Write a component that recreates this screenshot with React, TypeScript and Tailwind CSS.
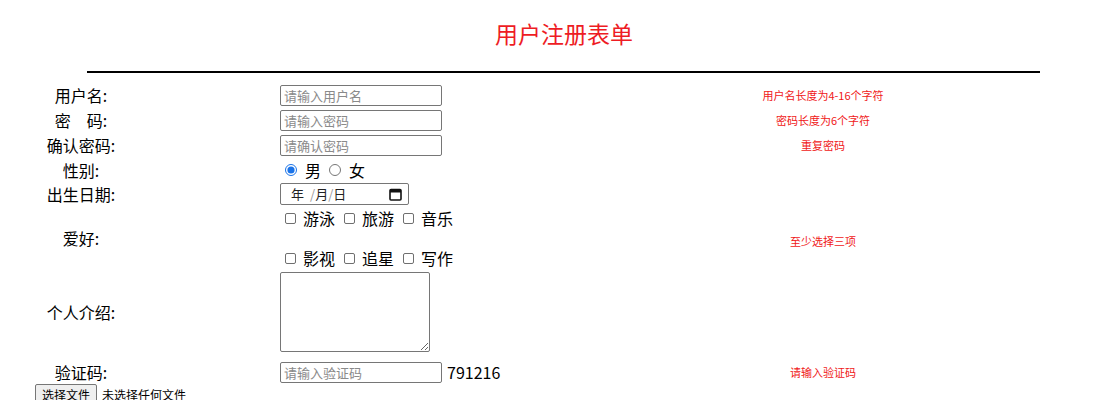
import React from 'react';

const FONT = '"Microsoft YaHei", "Noto Sans CJK SC", "Noto Sans", sans-serif';

interface RowProps {
    label: string;
    tip?: string;
    className?: string;
    tipClassName?: string;
    children: React.ReactNode;
}

const Row: React.FC<RowProps> = ({ label, tip, className, tipClassName, children }) => (
    <div className={`grid grid-cols-[280px_420px_246px] ${className ?? ''}`}>
        <div className="w-[162px] flex items-center justify-center text-[16px] text-black">{label}</div>
        <div className="flex items-center">{children}</div>
        <div className={`flex items-center justify-center text-[11px] text-[#f01818] ${tipClassName ?? ''}`}>{tip}</div>
    </div>
);

const textInput =
    'w-[162px] h-[21px] px-[3px] border border-[#767676] rounded-[2px] text-[13px] bg-white outline-none placeholder:text-[#8a8a8a]';

const hobbies1 = ['游泳', '旅游', '音乐'];
const hobbies2 = ['影视', '追星', '写作'];

const CheckLine: React.FC<{ items: string[] }> = ({ items }) => (
    <div className="flex items-center h-[20px] text-[16px]">
        {items.map((h) => (
            <label key={h} className="flex items-center">
                <input type="checkbox" className="appearance-none w-[11px] h-[11px] border border-[#6f6f6f] rounded-[2px] ml-[5px] mr-[7px]" />
                <span className="mr-[4px]">{h}</span>
            </label>
        ))}
    </div>
);

export default function App() {
    return (
        <div className="w-[1114px] h-[400px] overflow-hidden bg-white text-black" style={{ fontFamily: FONT }}>
            <h1 className="pt-[19px] pl-[14px] text-center text-[23px] leading-[28px] text-[#ee1c24]">用户注册表单</h1>
            <div className="mt-[24px] ml-[87px] w-[953px] h-[2px] bg-black" />

            <form className="mt-[10px] flex flex-col">
                <Row label="用户名:" tip="用户名长度为4-16个字符" className="h-[21px]">
                    <input className={textInput} placeholder="请输入用户名" />
                </Row>
                <Row label="密　码:" tip="密码长度为6个字符" className="h-[21px] mt-[4px]">
                    <input type="password" className={textInput} placeholder="请输入密码" />
                </Row>
                <Row label="确认密码:" tip="重复密码" className="h-[21px] mt-[4px]">
                    <input type="password" className={textInput} placeholder="请确认密码" />
                </Row>
                <Row label="性别:" className="h-[21px] mt-[4px]">
                    <div className="flex items-center text-[16px]">
                        <input type="radio" name="sex" defaultChecked className="w-[12px] h-[12px] ml-[5px] mr-[8px] accent-[#1a73e8]" />
                        <span>男</span>
                        <input type="radio" name="sex" className="w-[12px] h-[12px] ml-[8px] mr-[8px]" />
                        <span>女</span>
                    </div>
                </Row>
                <Row label="出生日期:" className="h-[22px] mt-[3px]">
                    <div className="w-[129px] h-[22px] border border-[#767676] rounded-[2px] flex items-center pl-[10px] pr-[6px] text-[13px] text-[#222]">
                        <span>年</span>
                        <span className="ml-[6px] text-[#999]">/</span>
                        <span>月</span>
                        <span className="text-[#999]">/</span>
                        <span>日</span>
                        <svg className="ml-auto" width="13" height="13" viewBox="0 0 13 13">
                            <rect x="1" y="1.5" width="11" height="10.5" rx="1" fill="none" stroke="#111" strokeWidth="1.6" />
                            <rect x="1" y="1.5" width="11" height="3" fill="#111" />
                        </svg>
                    </div>
                </Row>
                <Row label="爱好:" tip="至少选择三项" className="h-[60px] mt-[4px]" tipClassName="pt-[7px]">
                    <div className="flex flex-col">
                        <CheckLine items={hobbies1} />
                        <div className="h-[20px]" />
                        <CheckLine items={hobbies2} />
                    </div>
                </Row>
                <Row label="个人介绍:" className="h-[80px] mt-[4px]">
                    <textarea className="w-[150px] h-[80px] border border-[#767676] rounded-[2px] resize" />
                </Row>
                <Row label="验证码:" tip="请输入验证码" className="h-[21px] mt-[8px]">
                    <input className={textInput} placeholder="请输入验证码" />
                    <span className="ml-[5px] text-[16px]">791216</span>
                </Row>
                <div className="mt-[3px] ml-[35px] flex items-center text-[12px]">
                    <button type="button" className="h-[21px] px-[6px] bg-[#efefef] border border-[#767676] rounded-[2px]">选择文件</button>
                    <span className="ml-[5px]">未选择任何文件</span>
                </div>
            </form>
        </div>
    );
}
